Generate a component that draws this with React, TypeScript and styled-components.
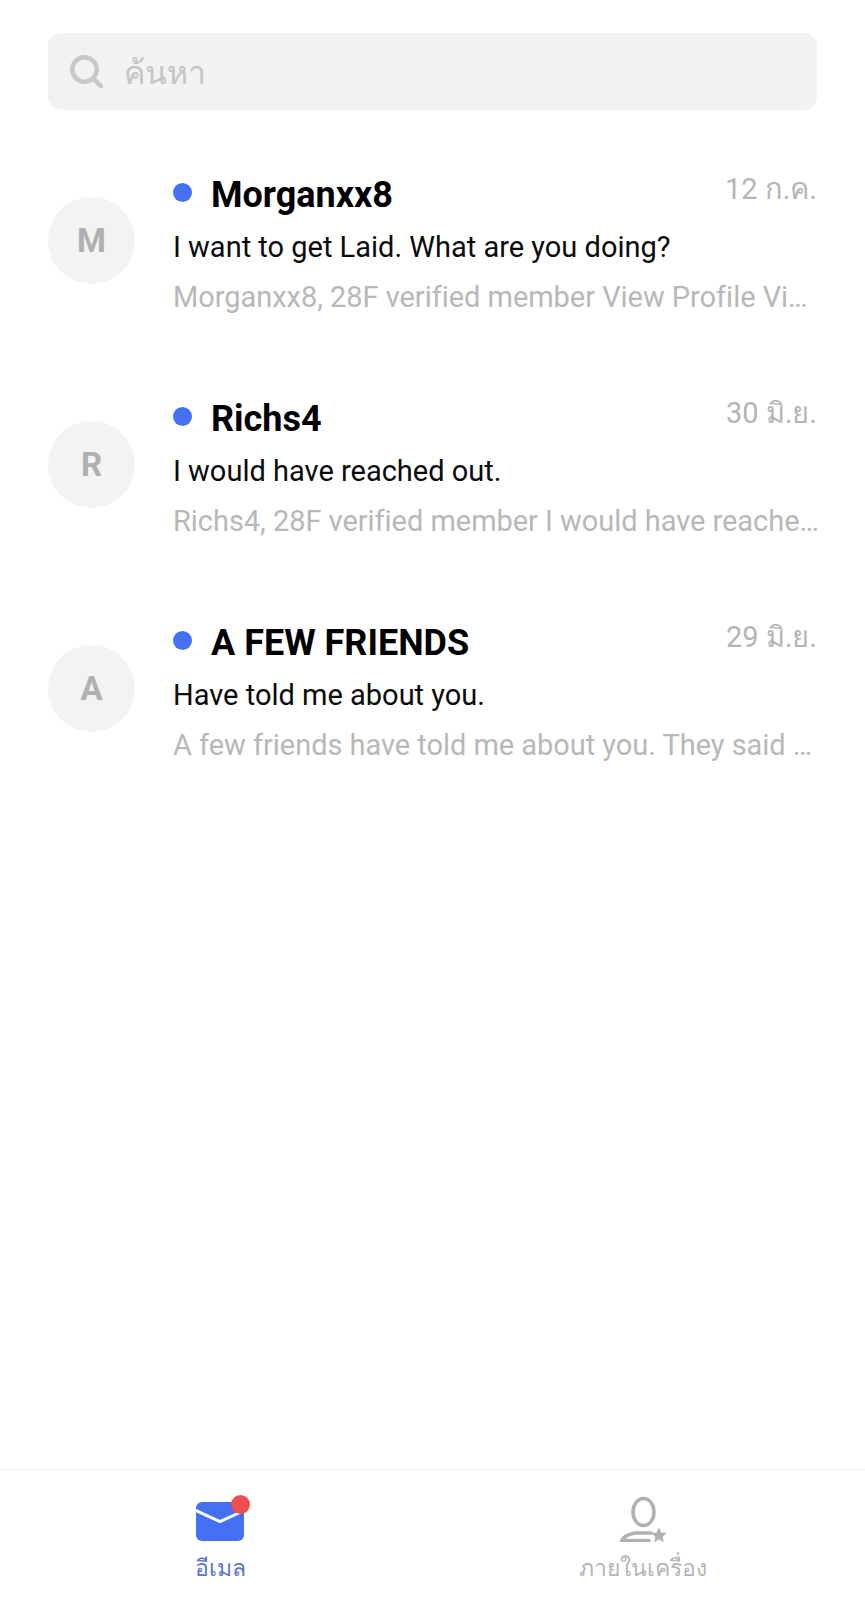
import React from "react"
import styled, { createGlobalStyle } from "styled-components"

const GlobalStyle = createGlobalStyle`
  html, body {
    margin: 0;
    padding: 0;
    background: #fff;
    font-family: Roboto, "Noto Sans", sans-serif;
  }
`

const Page = styled.div`
  width: 865px;
  height: 1600px;
  display: flex;
  flex-direction: column;
  background: #fff;
  overflow: hidden;
`

const Content = styled.main`
  flex: 1;
  padding: 33px 48px 0;
`

const SearchBar = styled.div`
  height: 77px;
  box-sizing: border-box;
  display: flex;
  align-items: center;
  gap: 21px;
  padding-left: 22px;
  border-radius: 13px;
  background: #f2f2f2;
`

const SearchHint = styled.span`
  font-size: 32px;
  line-height: 40px;
  padding-top: 2px;
  color: #c4c4c4;
`

const MailList = styled.div`
  margin-top: 57px;
  display: flex;
  flex-direction: column;
  gap: 69px;
`

const MailRow = styled.div`
  display: flex;
  align-items: flex-start;
  gap: 38px;
`

const Avatar = styled.div`
  width: 87px;
  height: 87px;
  margin-top: 30px;
  flex-shrink: 0;
  display: flex;
  align-items: center;
  justify-content: center;
  border-radius: 50%;
  background: #f3f3f3;
  color: #b0b0b0;
  font-size: 33px;
  font-weight: 700;
`

const MailBody = styled.div`
  flex: 1;
  min-width: 0;
  margin-top: 8px;
`

const TitleRow = styled.div`
  display: flex;
  align-items: flex-start;
  height: 48px;
`

const UnreadDot = styled.span`
  width: 19px;
  height: 19px;
  margin-top: 8px;
  border-radius: 50%;
  background: #4470f4;
  flex-shrink: 0;
`

const Sender = styled.span`
  flex: 1;
  margin-left: 19px;
  font-size: 36px;
  line-height: 40px;
  font-weight: 700;
  color: #000;
`

const MailDate = styled.span`
  font-size: 29px;
  line-height: 32px;
  margin-top: -2px;
  color: #b5b5b5;
`

const Subject = styled.div`
  font-size: 29px;
  line-height: 49px;
  color: #0a0a0a;
`

const Preview = styled.div`
  margin-top: 1px;
  font-size: 29px;
  line-height: 49px;
  letter-spacing: -0.04px;
  color: #b8b8b8;
  white-space: nowrap;
`

const TabBar = styled.nav`
  height: 131px;
  box-sizing: border-box;
  flex-shrink: 0;
  padding: 0 11px 0 9px;
  display: grid;
  grid-template-columns: 1fr 1fr;
  border-top: 1px solid #efefef;
`

const Tab = styled.div`
  display: flex;
  flex-direction: column;
  align-items: center;
  padding-top: 24px;
`

const TabIcon = styled.div`
  position: relative;
  width: 48px;
  height: 48px;
`

const Badge = styled.span`
  position: absolute;
  top: 1px;
  right: -6px;
  width: 19px;
  height: 19px;
  border-radius: 50%;
  background: #f04d4f;
`

const TabLabel = styled.span<{ $active?: boolean }>`
  margin-top: 12px;
  font-size: 23px;
  line-height: 30px;
  white-space: nowrap;
  color: ${(props) => (props.$active ? "#5a78c8" : "#b5b5b5")};
`

const mails = [
  { initial: "M", sender: "Morganxx8", date: "12 ก.ค.", subject: "I want to get Laid. What are you doing?", preview: "Morganxx8, 28F verified member View Profile Vi…" },
  { initial: "R", sender: "Richs4", date: "30 มิ.ย.", subject: "I would have reached out.", preview: "Richs4, 28F verified member I would have reache…" },
  { initial: "A", sender: "A FEW FRIENDS", date: "29 มิ.ย.", subject: "Have told me about you.", preview: "A few friends have told me about you. They said …" },
]

const SearchIcon = () => (
  <svg width="33" height="33" viewBox="0 0 33 33" fill="none" stroke="#c8c8c8" strokeWidth="4.5" strokeLinecap="round">
    <circle cx="14.5" cy="14.5" r="12.2" />
    <path d="M24 24.5l7 6.5" />
  </svg>
)

const MailIcon = () => (
  <svg width="48" height="48" viewBox="0 0 48 48">
    <rect x="0" y="8" width="48" height="39" rx="6" fill="#4470f4" />
    <path d="M0 16.5l24 11 22-10" fill="none" stroke="#fff" strokeWidth="3" strokeLinecap="round" />
  </svg>
)

const LocalIcon = () => (
  <svg width="48" height="48" viewBox="0 0 48 48" fill="none" stroke="#b0b0b0" strokeWidth="3.5" strokeLinecap="round">
    <ellipse cx="24.5" cy="18" rx="10.5" ry="13.5" />
    <path d="M32 39H16C10 40 4 43 3 46.5H30" />
    <path d="M40 33.5l2.3 5 5.4.6-4 3.7 1.1 5.4-4.8-2.8-4.8 2.8 1.1-5.4-4-3.7 5.4-.6z" fill="#b0b0b0" stroke="none" />
  </svg>
)

export default function App() {
  return (
    <Page>
      <GlobalStyle />
      <Content>
        <SearchBar>
          <SearchIcon />
          <SearchHint>ค้นหา</SearchHint>
        </SearchBar>
        <MailList>
          {mails.map((mail) => (
            <MailRow key={mail.sender}>
              <Avatar>{mail.initial}</Avatar>
              <MailBody>
                <TitleRow>
                  <UnreadDot />
                  <Sender>{mail.sender}</Sender>
                  <MailDate>{mail.date}</MailDate>
                </TitleRow>
                <Subject>{mail.subject}</Subject>
                <Preview>{mail.preview}</Preview>
              </MailBody>
            </MailRow>
          ))}
        </MailList>
      </Content>
      <TabBar>
        <Tab>
          <TabIcon>
            <MailIcon />
            <Badge />
          </TabIcon>
          <TabLabel $active>อีเมล</TabLabel>
        </Tab>
        <Tab>
          <TabIcon>
            <LocalIcon />
          </TabIcon>
          <TabLabel>ภายในเครื่อง</TabLabel>
        </Tab>
      </TabBar>
    </Page>
  )
}
